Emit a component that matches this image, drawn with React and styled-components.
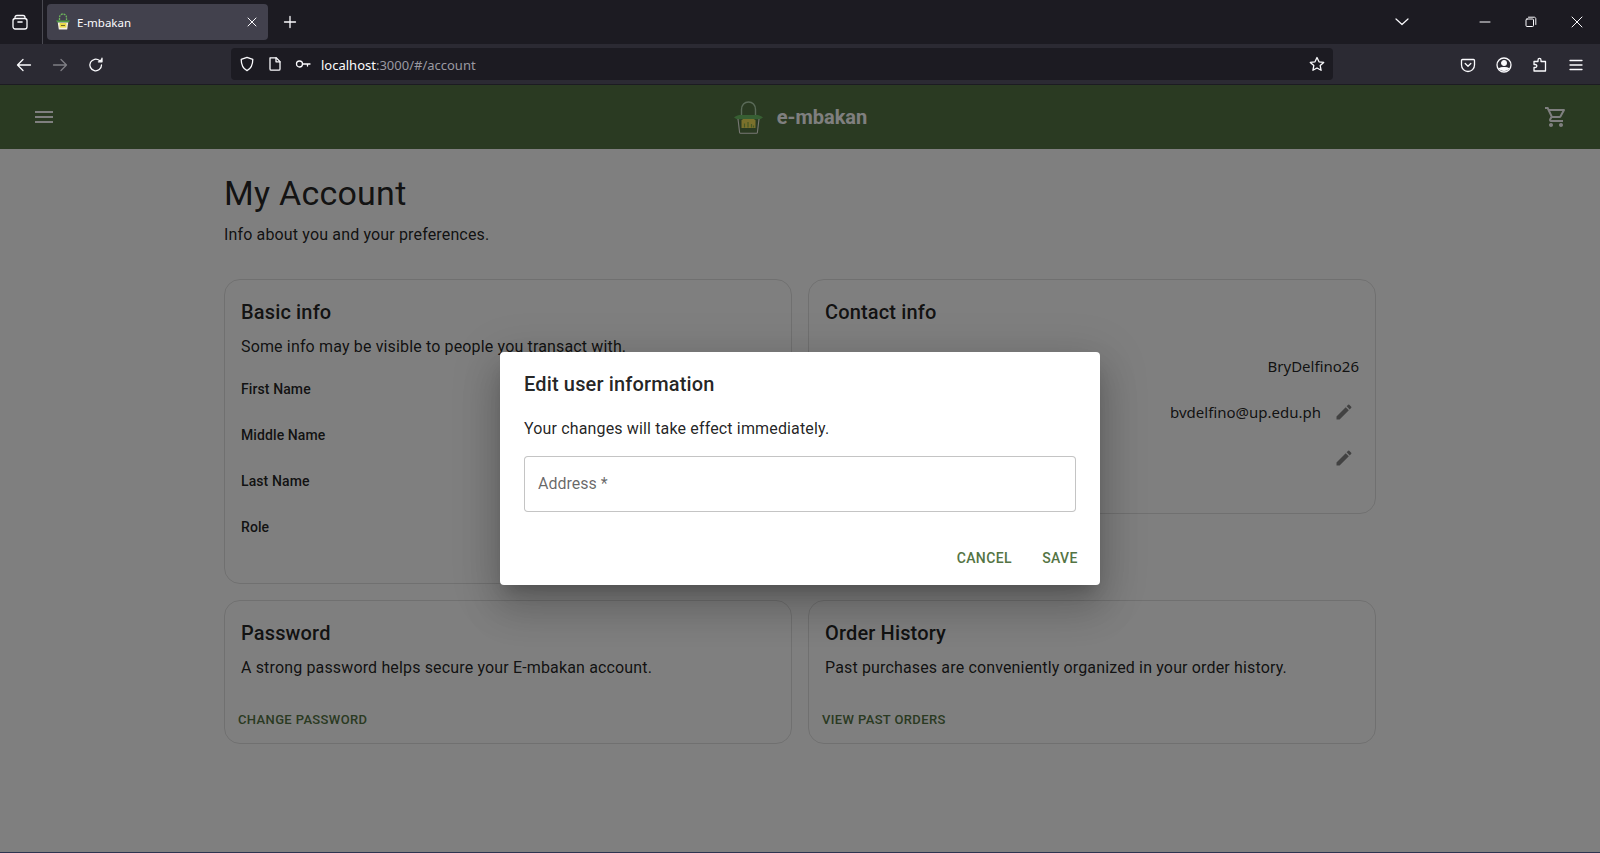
import React from "react";
import styled, { createGlobalStyle } from "styled-components";

const GlobalStyle = createGlobalStyle`
  * { box-sizing: border-box; }
  html, body { margin: 0; height: 100%; overflow: hidden; }
  body { font-family: Roboto, "Liberation Sans", sans-serif; background: #1c1b22; }
`;

const PRIMARY = "#547444";

function Svg({ size = 16, box = 16, children, className }) {
  return (
    <svg className={className} width={size} height={size} viewBox={`0 0 ${box} ${box}`} fill="none" stroke="#fbfbfe" strokeWidth="1.3" strokeLinecap="round" strokeLinejoin="round">
      {children}
    </svg>
  );
}

function MuiIcon({ d, className }) {
  return (
    <svg className={className} width="24" height="24" viewBox="0 0 24 24" fill="currentColor">
      <path d={d} />
    </svg>
  );
}

const MENU_D = "M3 18h18v-2H3v2zm0-5h18v-2H3v2zm0-7v2h18V6H3z";
const CART_D = "M15.55 13c.75 0 1.41-.41 1.75-1.03l3.58-6.49c.37-.66-.11-1.48-.87-1.48H5.21l-.94-2H1v2h2l3.6 7.59-1.35 2.44C4.52 15.37 5.48 17 7 17h12v-2H7l1.1-2h7.45zM6.16 6h12.15l-2.76 5H8.53L6.16 6zM7 18c-1.1 0-1.99.9-1.99 2S5.9 22 7 22s2-.9 2-2-.9-2-2-2zm10 0c-1.1 0-1.99.9-1.99 2s.89 2 1.99 2 2-.9 2-2-.9-2-2-2z";
const EDIT_D = "M3 17.25V21h3.75L17.81 9.94l-3.75-3.75L3 17.25zM20.71 7.04c.39-.39.39-1.02 0-1.41l-2.34-2.34a.9959.9959 0 0 0-1.41 0l-1.83 1.83 3.75 3.75 1.83-1.83z";

function Favicon() {
  return (
    <svg width="16" height="18" viewBox="0 0 16 18" fill="none">
      <path d="M4.5 7V4.5a3.5 3.5 0 0 1 7 0V7" stroke="#6cb45c" strokeWidth="1.3" strokeDasharray="2 0.8" />
      <path d="M1 7.5h14l-1.5 2h-11z" fill="#4fa045" />
      <path d="M2.8 9.5h10.4l-1 7H3.8z" fill="#f4f2e6" />
      <rect x="4.6" y="10" width="6.8" height="4.6" fill="#eadb4a" />
      <rect x="6" y="12" width="4" height="1" fill="#6b6a2a" />
    </svg>
  );
}

function Logo() {
  return (
    <svg width="31" height="33" viewBox="0 0 30 33" fill="none">
      <path d="M8 14V8.500C8 4 11 1 15 1s7 3 7 7.500V14" stroke="#b4d4b0" strokeWidth="1.4" />
      <path d="M0.500 16.500C3 14.500 5 14 8 14h14c3 0 5 .5 7.500 2.500l-3 1.800h-23z" fill="#6fbf66" />
      <path d="M4.500 18l1.600 13.500c.1.5.4.8.9.8h16c.5 0 .8-.3.9-.8L25.500 18" stroke="#f0f0e8" strokeWidth="1.100" />
      <path d="M9.500 18h11l1.500 1.500V27H8v-7.500z" fill="#f6e258" />
      <path d="M11 26.500v-4M14.500 26.500v-5.500M18 26.500v-3.500M20 26.500v-2" stroke="#8fb34a" strokeWidth="1.200" />
    </svg>
  );
}

export default function App() {
  return (
    <Page>
      <GlobalStyle />
      <TabStrip>
        <ChromeIcon $w={40}>
          <Svg size={18} box={18}>
            <path d="M4 4.500C4 3.200 4.800 2.500 6 2.500h6c1.200 0 2 .7 2 2" />
            <rect x="2" y="5.500" width="14" height="10.500" rx="2.200" />
            <path d="M7 9h4" strokeWidth="1.600" />
          </Svg>
        </ChromeIcon>
        <TabDivider />
        <Tab>
          <Favicon />
          <TabTitle>E-mbakan</TabTitle>
          <TabClose>
            <Svg size={12} box={12}><path d="M2 2l8 8M10 2l-8 8" strokeWidth="1" /></Svg>
          </TabClose>
        </Tab>
        <ChromeIcon $w={44}>
          <Svg size={16} box={16}><path d="M8 2.500v11M2.500 8h11" /></Svg>
        </ChromeIcon>
        <Spacer />
        <ChromeIcon $w={44}>
          <Svg size={14} box={14}><path d="M1 4l6 5.500L13 4" strokeWidth="1.200" /></Svg>
        </ChromeIcon>
        <WindowButtons>
          <ChromeIcon $w={46}>
            <Svg size={12} box={12}><path d="M1 6h10" strokeWidth="1" /></Svg>
          </ChromeIcon>
          <ChromeIcon $w={46}>
            <Svg size={12} box={12}><rect x="1" y="3" width="7.500" height="7.500" rx="1" strokeWidth="1" /><path d="M3.500 1.200h5.800c.8 0 1.500.7 1.500 1.500v5.800" strokeWidth="1" /></Svg>
          </ChromeIcon>
          <ChromeIcon $w={46}>
            <Svg size={12} box={12}><path d="M1 1l10 10M11 1L1 11" strokeWidth="1" /></Svg>
          </ChromeIcon>
        </WindowButtons>
      </TabStrip>

      <Toolbar>
        <ToolIcon $w={36}>
          <Svg><path d="M14.500 8h-13M7 2.500L1.500 8 7 13.500" /></Svg>
        </ToolIcon>
        <ToolIcon $w={36} $dim>
          <Svg><path d="M1.500 8h13M9 2.500L14.500 8 9 13.500" /></Svg>
        </ToolIcon>
        <ToolIcon $w={36}>
          <Svg><path d="M13.500 8a5.800 5.800 0 1 1-2-4.400" /><path d="M14 1.200v3.600h-3.600" fill="#fbfbfe" /></Svg>
        </ToolIcon>
        <UrlBar>
          <UrlIcon>
            <Svg><path d="M8 1.300l5.800 2c0 5.500-1.500 9.200-5.800 11.400C3.700 12.500 2.200 8.800 2.200 3.300z" /></Svg>
          </UrlIcon>
          <UrlIcon>
            <Svg><path d="M3 1.800h6.200L13 5.600V13c0 .7-.5 1.200-1.200 1.200H4.200C3.500 14.200 3 13.700 3 13z" /><path d="M9 1.800V5.800h4" /></Svg>
          </UrlIcon>
          <UrlIcon>
            <Svg><circle cx="4.500" cy="8" r="3" /><path d="M7.500 8h7.500M12.500 8v2" /></Svg>
          </UrlIcon>
          <UrlText>localhost<UrlRest>:3000/#/account</UrlRest></UrlText>
          <Spacer />
          <UrlIcon $end>
            <Svg><path d="M8 1.500l2 4.300 4.700.6-3.500 3.200.9 4.700L8 12l-4.100 2.300.9-4.700L1.300 6.400 6 5.800z" /></Svg>
          </UrlIcon>
        </UrlBar>
        <Spacer />
        <ToolIcon $w={36}>
          <Svg><path d="M2.500 2.500h11c.6 0 1 .4 1 1V8a6.500 6.500 0 0 1-13 0V3.500c0-.6.4-1 1-1z" /><path d="M5.200 6.500L8 9.200l2.800-2.700" /></Svg>
        </ToolIcon>
        <ToolIcon $w={36}>
          <Svg>
            <circle cx="8" cy="8" r="7" />
            <circle cx="8" cy="6" r="2.300" fill="#fbfbfe" />
            <path d="M3.500 11.500c1.500-1.300 7.500-1.300 9 0-2 2.500-7 2.500-9 0z" fill="#fbfbfe" />
          </Svg>
        </ToolIcon>
        <ToolIcon $w={36}>
          <Svg><path d="M6 3.200c0-2.400 3-2.400 3 0V4.500h4.500V14H2V10.500h1.200c2.200 0 2.200-3 0-3H2V4.500h4z" /></Svg>
        </ToolIcon>
        <ToolIcon $w={36}>
          <Svg><path d="M2 3.500h12M2 8h12M2 12.500h12" /></Svg>
        </ToolIcon>
        <RightGap />
      </Toolbar>

      <Viewport>
        <AppBar>
          <BarIcon d={MENU_D} />
          <Brand>
            <Logo />
            <BrandName>e-mbakan</BrandName>
          </Brand>
          <BarIcon d={CART_D} />
        </AppBar>

        <Main>
          <Heading>My Account</Heading>
          <Lead>Info about you and your preferences.</Lead>
          <CardGrid>
            <Card>
              <CardTitle>Basic info</CardTitle>
              <CardText>Some info may be visible to people you transact with.</CardText>
              <LabelList>
                <LabelRow>First Name</LabelRow>
                <LabelRow>Middle Name</LabelRow>
                <LabelRow>Last Name</LabelRow>
                <LabelRow>Role</LabelRow>
              </LabelList>
            </Card>
            <Card>
              <CardTitle>Contact info</CardTitle>
              <ContactList>
                <ContactRow><Value>BryDelfino26</Value></ContactRow>
                <ContactRow>
                  <Value>bvdelfino@up.edu.ph</Value>
                  <EditIcon d={EDIT_D} />
                </ContactRow>
                <ContactRow>
                  <EditIcon d={EDIT_D} />
                </ContactRow>
              </ContactList>
            </Card>
            <Card>
              <CardTitle>Password</CardTitle>
              <CardText>A strong password helps secure your E-mbakan account.</CardText>
              <CardAction>Change password</CardAction>
            </Card>
            <Card>
              <CardTitle>Order History</CardTitle>
              <CardText>Past purchases are conveniently organized in your order history.</CardText>
              <CardAction>View past orders</CardAction>
            </Card>
          </CardGrid>
        </Main>

        <Backdrop>
          <Dialog>
            <DialogTitle>Edit user information</DialogTitle>
            <DialogBody>
              <DialogText>Your changes will take effect immediately.</DialogText>
              <AddressInput placeholder="Address *" />
            </DialogBody>
            <DialogActions>
              <TextButton>Cancel</TextButton>
              <TextButton>Save</TextButton>
            </DialogActions>
          </Dialog>
        </Backdrop>
      </Viewport>
      <TaskbarEdge />
    </Page>
  );
}

const Page = styled.div`
  height: 853px;
  display: flex;
  flex-direction: column;
`;

const TabStrip = styled.div`
  height: 44px;
  flex: none;
  display: flex;
  align-items: center;
  background: #1c1b22;
`;

const ChromeIcon = styled.div`
  width: ${(p) => p.$w}px;
  height: 36px;
  flex: none;
  display: flex;
  align-items: center;
  justify-content: center;
  opacity: ${(p) => (p.$dim ? 0.4 : 1)};
`;

const ToolIcon = styled(ChromeIcon)`
  padding-top: 2px;
`;

const TabDivider = styled.div`
  width: 1px;
  height: 44px;
  margin: 0 4px 0 2px;
  background: #4a4a52;
`;

const Tab = styled.div`
  width: 221px;
  height: 36px;
  display: flex;
  align-items: center;
  padding: 0 10px 0 8px;
  gap: 6px;
  border-radius: 4px;
  background: #42414d;
`;

const TabTitle = styled.span`
  flex: 1;
  color: #fbfbfe;
  font: 11.5px "Noto Sans", "Open Sans", sans-serif;
`;

const TabClose = styled.div`
  display: flex;
`;

const Spacer = styled.div`
  flex: 1;
`;

const WindowButtons = styled.div`
  display: flex;
  margin-left: 38px;
`;

const Toolbar = styled.div`
  height: 40px;
  flex: none;
  display: flex;
  align-items: center;
  padding-left: 6px;
  background: #2b2a33;
`;

const UrlBar = styled.div`
  width: 1102px;
  height: 32px;
  margin-left: 117px;
  display: flex;
  align-items: center;
  padding-left: 2px;
  border-radius: 4px;
  background: #1c1b22;
`;

const UrlIcon = styled.div`
  width: 28px;
  height: 16px;
  display: flex;
  justify-content: center;
  margin-right: ${(p) => (p.$end ? "2px" : "0")};
`;

const UrlText = styled.span`
  margin-left: 4px;
  padding-top: 1px;
  color: #fbfbfe;
  font: 13px "Noto Sans", "Open Sans", sans-serif;
`;

const UrlRest = styled.span`
  color: #9a99a1;
`;

const RightGap = styled.div`
  width: 6px;
`;

const Viewport = styled.div`
  position: relative;
  flex: 1;
  min-height: 0;
  margin-top: 1px;
  background: #fff;
`;

const AppBar = styled.header`
  height: 64px;
  display: flex;
  align-items: center;
  justify-content: space-between;
  padding: 0 32px;
  color: #fff;
  background: ${PRIMARY};
`;

const BarIcon = styled(MuiIcon)`
  flex: none;
`;

const Brand = styled.div`
  display: flex;
  align-items: center;
  gap: 13px;
`;

const BrandName = styled.span`
  color: #fff;
  font-size: 20px;
  font-weight: 700;
`;

const Main = styled.main`
  width: 1152px;
  margin: 0 auto;
  padding-top: 24px;
`;

const Heading = styled.h1`
  margin: 0 0 8px;
  color: rgba(0, 0, 0, 0.87);
  font-size: 34px;
  font-weight: 400;
  line-height: 1.235;
  letter-spacing: 0.25px;
`;

const Lead = styled.p`
  margin: 0 0 32px;
  color: rgba(0, 0, 0, 0.87);
  font-size: 16px;
  line-height: 1.5;
  letter-spacing: 0.15px;
`;

const CardGrid = styled.div`
  display: grid;
  grid-template-columns: 1fr 1fr;
  gap: 16px;
  align-items: start;
`;

const Card = styled.section`
  display: flex;
  flex-direction: column;
  padding: 16px 16px 0;
  border: 1px solid rgba(0, 0, 0, 0.12);
  border-radius: 16px;
`;

const CardTitle = styled.h2`
  margin: 0;
  color: rgba(0, 0, 0, 0.87);
  font-size: 20px;
  font-weight: 500;
  line-height: 1.6;
  letter-spacing: 0.15px;
`;

const CardText = styled.p`
  margin: 7px 0 0;
  color: rgba(0, 0, 0, 0.87);
  font-size: 16px;
  line-height: 1.5;
  letter-spacing: 0.15px;
`;

const LabelList = styled.div`
  margin-top: 7px;
  padding-bottom: 33px;
`;

const LabelRow = styled.div`
  height: 46px;
  display: flex;
  align-items: center;
  color: rgba(0, 0, 0, 0.87);
  font-size: 14px;
  font-weight: 500;
  letter-spacing: 0.1px;
`;

const ContactList = styled.div`
  margin-top: 15px;
  padding-bottom: 32px;
`;

const ContactRow = styled.div`
  height: 46px;
  display: flex;
  align-items: center;
  justify-content: flex-end;
`;

const Value = styled.span`
  color: rgba(0, 0, 0, 0.87);
  font: 15px "Noto Sans", "Open Sans", sans-serif;
`;

const EditIcon = styled(MuiIcon)`
  width: 20px;
  height: 20px;
  margin: 0 5px 0 13px;
  color: rgba(0, 0, 0, 0.48);
`;

const CardAction = styled.a`
  align-self: flex-start;
  margin: 25px 0 7px -8px;
  padding: 4px 5px;
  color: ${PRIMARY};
  font-size: 13px;
  font-weight: 500;
  line-height: 1.75;
  letter-spacing: 0.37px;
  text-transform: uppercase;
`;

const Backdrop = styled.div`
  position: absolute;
  inset: 0;
  display: flex;
  align-items: center;
  justify-content: center;
  background: rgba(0, 0, 0, 0.5);
`;

const Dialog = styled.div`
  width: 600px;
  border-radius: 4px;
  background: #fff;
  box-shadow: 0 11px 15px -7px rgba(0, 0, 0, 0.2), 0 24px 38px 3px rgba(0, 0, 0, 0.14), 0 9px 46px 8px rgba(0, 0, 0, 0.12);
`;

const DialogTitle = styled.h2`
  margin: 0;
  padding: 16px 24px;
  color: rgba(0, 0, 0, 0.87);
  font-size: 20px;
  font-weight: 500;
  line-height: 1.6;
  letter-spacing: 0.15px;
`;

const DialogBody = styled.div`
  padding: 1px 24px 12px;
`;

const DialogText = styled.p`
  margin: 0;
  color: rgba(0, 0, 0, 0.87);
  font-size: 16px;
  line-height: 1.5;
  letter-spacing: 0.15px;
`;

const AddressInput = styled.input`
  display: block;
  width: 100%;
  height: 56px;
  margin: 15px 0 8px;
  padding: 0 13px 2px;
  border: 1px solid rgba(0, 0, 0, 0.23);
  border-radius: 4px;
  outline: none;
  font: 16px Roboto, sans-serif;
  &::placeholder {
    color: rgba(0, 0, 0, 0.6);
    opacity: 1;
  }
`;

const DialogActions = styled.div`
  display: flex;
  justify-content: flex-end;
  gap: 8px;
  padding: 8px;
`;

const TextButton = styled.button`
  min-width: 64px;
  padding: 6px 8px;
  border: 0;
  background: none;
  color: ${PRIMARY};
  font: 500 14px/1.75 Roboto, sans-serif;
  letter-spacing: 0.4px;
  text-transform: uppercase;
`;

const TaskbarEdge = styled.div`
  height: 1px;
  flex: none;
  background: #2d3350;
`;
